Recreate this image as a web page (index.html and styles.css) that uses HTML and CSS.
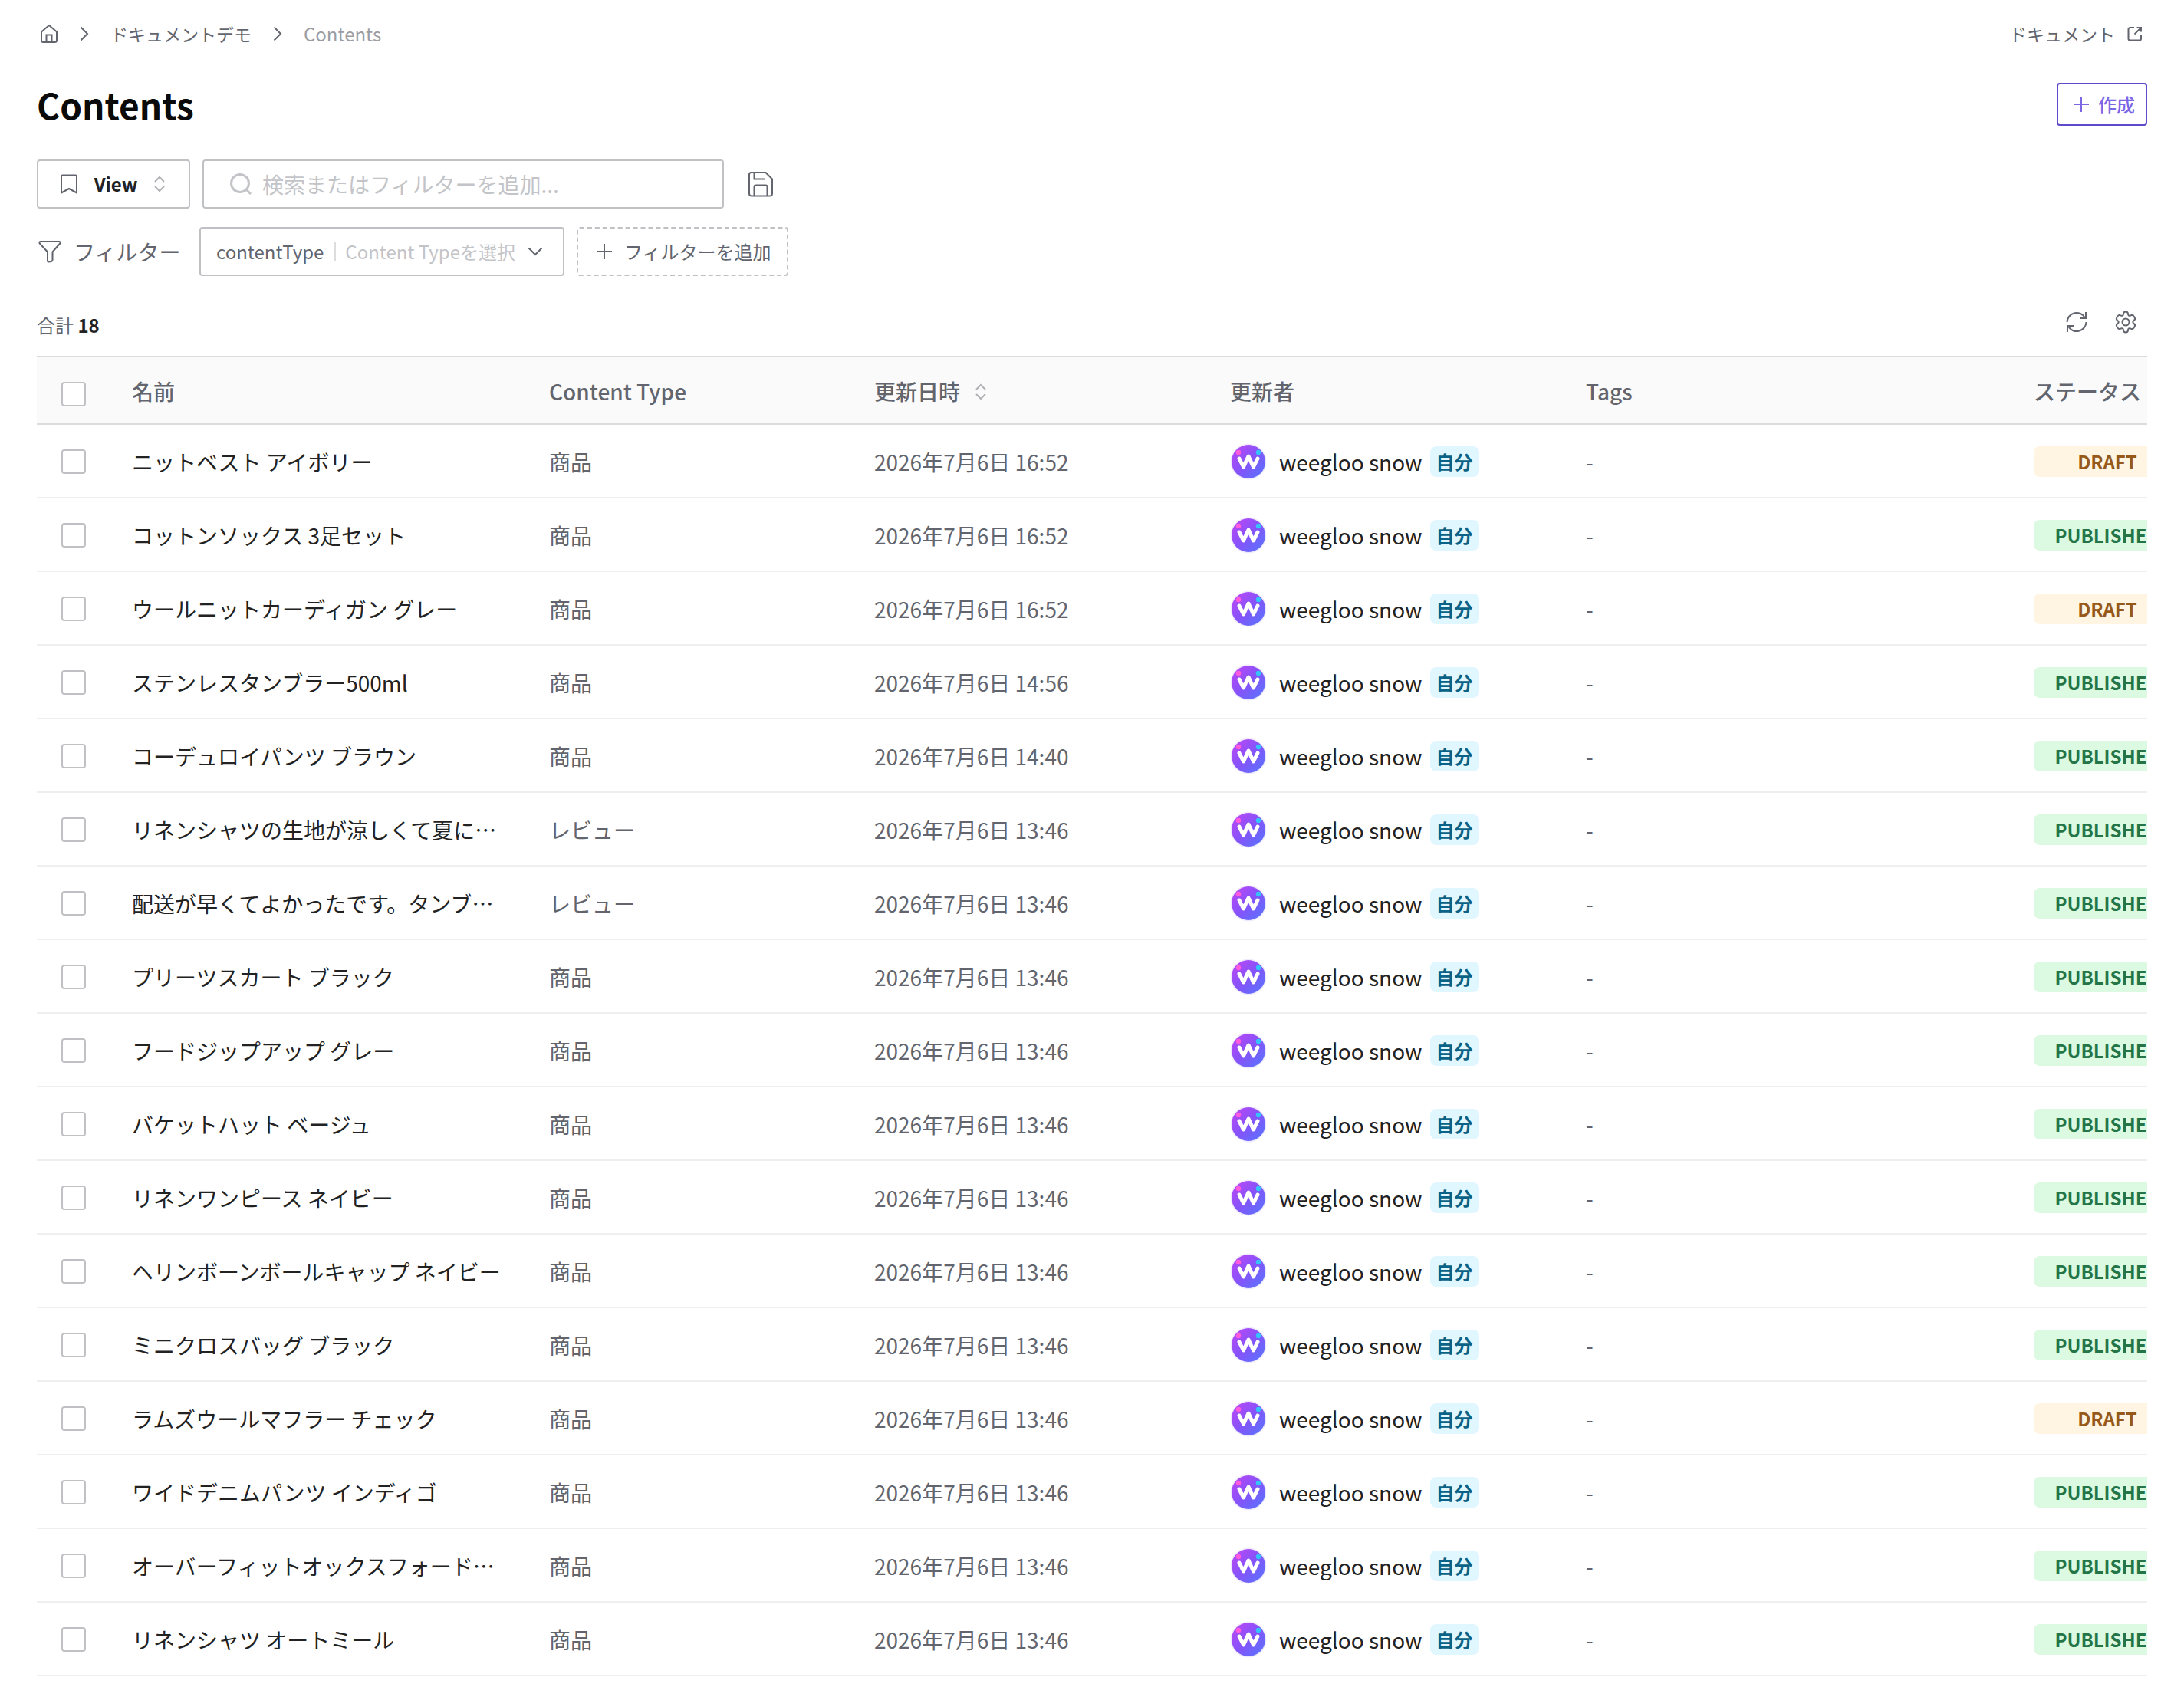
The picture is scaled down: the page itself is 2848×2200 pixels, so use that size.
FILE: index.html
```html
<!DOCTYPE html>
<html lang="ja">
<head>
    <meta charset="UTF-8">
    <meta name="viewport" content="width=device-width, initial-scale=1.0">
    <title>Contents</title>
    <link rel="stylesheet" href="styles.css">
</head>
<body>
    <!-- Shared icons -->
    <svg class="sprite" aria-hidden="true">
        <defs>
            <linearGradient id="avatar-bg" x1="0" y1="0" x2="1" y2="1">
                <stop offset="0" stop-color="#c046f5"/>
                <stop offset="0.5" stop-color="#8553fa"/>
                <stop offset="1" stop-color="#5478ff"/>
            </linearGradient>
        </defs>
        <symbol id="chevron" viewBox="0 0 12 20">
            <path d="M1.5 1.5L10 10L1.5 18.5"/>
        </symbol>
        <symbol id="plus" viewBox="0 0 20 20">
            <path d="M10 0V20M0 10H20"/>
        </symbol>
        <symbol id="sort" viewBox="0 0 14 22">
            <path d="M1 8L7 2L13 8M1 14L7 20L13 14"/>
        </symbol>
        <symbol id="avatar" viewBox="0 0 48 48">
            <circle cx="24" cy="24" r="23.5" fill="#eeeafc"/>
            <circle cx="24" cy="24" r="22" fill="url(#avatar-bg)"/>
            <circle cx="11" cy="12" r="3.2" fill="#ff5bdc"/>
            <circle cx="37" cy="12" r="3.2" fill="#35c3fb"/>
            <path d="M12 20L17.5 31L24 17L30.5 31L36 20" fill="none" stroke="#fff" stroke-width="5" stroke-linecap="round" stroke-linejoin="round"/>
        </symbol>
    </svg>

    <main class="page">
        <!-- Breadcrumb -->
        <div class="topbar">
            <nav class="breadcrumb">
                <a href="#" class="home" aria-label="Home">
                    <svg class="icon" width="24" height="26" viewBox="0 0 24 26"><path d="M2 10.5L12 2L22 10.5V21.5A2.5 2.5 0 0 1 19.5 24H4.5A2.5 2.5 0 0 1 2 21.5ZM8.5 24V14.5H15.5V24"/></svg>
                </a>
                <svg class="icon" width="12" height="20"><use href="#chevron"/></svg>
                <a href="#">ドキュメントデモ</a>
                <svg class="icon" width="12" height="20"><use href="#chevron"/></svg>
                <span class="current">Contents</span>
            </nav>
            <a href="#" class="doc-link">ドキュメント
                <svg class="icon" width="20" height="20" viewBox="0 0 20 20"><path d="M9 2H3.5A2 2 0 0 0 1.5 4V16.5A2 2 0 0 0 3.5 18.5H16A2 2 0 0 0 18 16.5V11M12.5 2H18V7.5M18 2L9.5 10.5"/></svg>
            </a>
        </div>

        <!-- Title -->
        <header class="page-header">
            <h1>Contents</h1>
            <button class="create-btn" type="button">
                <svg class="icon" width="20" height="20"><use href="#plus"/></svg>
                作成
            </button>
        </header>

        <!-- Search and filters -->
        <div class="search-row">
            <button class="view-btn" type="button">
                <svg class="icon" width="22" height="26" viewBox="0 0 22 26"><path d="M1 3A1.5 1.5 0 0 1 2.5 1.5H19.5A1.5 1.5 0 0 1 21 3V24.5L11 19L1 24.5Z"/></svg>
                <span>View</span>
                <svg class="icon sort" width="14" height="22"><use href="#sort"/></svg>
            </button>
            <label class="search-box">
                <svg class="icon" width="28" height="28" viewBox="0 0 28 28"><circle cx="13" cy="13" r="11.5"/><path d="M21.5 21.5L27 27"/></svg>
                <input type="text" aria-label="検索" placeholder="検索またはフィルターを追加...">
            </label>
            <button class="icon-btn save-btn" type="button" aria-label="Save">
                <svg class="icon" width="34" height="34" viewBox="0 0 34 34"><path d="M4.5 2H23.5L32 10.5V29.5A3 3 0 0 1 29 32.5H5A3 3 0 0 1 2 29.5V4.5A2.5 2.5 0 0 1 4.5 2ZM8.5 2V10.5H23M8.5 32V20.5A2 2 0 0 1 10.5 18.5H23.5A2 2 0 0 1 25.5 20.5V32"/></svg>
            </button>
        </div>

        <div class="filter-row">
            <span class="filter-label">
                <svg class="icon" width="30" height="30" viewBox="0 0 30 30"><path d="M3 2H27A1.5 1.5 0 0 1 28.2 4.5L18.5 15.5V26A2 2 0 0 1 17 28L13.5 28.5A1.5 1.5 0 0 1 12 27V15.5L1.8 4.5A1.5 1.5 0 0 1 3 2Z"/></svg>
                フィルター
            </span>
            <div class="type-filter">
                <label for="content-type">contentType</label>
                <select id="content-type">
                    <option>Content Typeを選択</option>
                </select>
                <svg class="icon" width="20" height="12" viewBox="0 0 20 12"><path d="M1.5 1.5L10 10L18.5 1.5"/></svg>
            </div>
            <button class="add-filter" type="button">
                <svg class="icon" width="20" height="20"><use href="#plus"/></svg>
                フィルターを追加
            </button>
        </div>

        <!-- List toolbar -->
        <div class="list-bar">
            <p class="total">合計 <strong>18</strong></p>
            <div class="list-actions">
                <button class="icon-btn" type="button" aria-label="Refresh">
                    <svg class="icon" width="28" height="28" viewBox="0 0 28 28"><path d="M1.5 14A12.5 12.5 0 0 1 25 8.5M26.5 14A12.5 12.5 0 0 1 3 19.5M26 1V9H18M2 27V19H10"/></svg>
                </button>
                <button class="icon-btn" type="button" aria-label="Settings">
                    <svg class="icon" width="30" height="30" viewBox="0 0 30 30"><path d="M15 1.5C17 1.5 18 2.8 18 4.6C18 6.4 19.6 7.4 21.3 6.5C23 5.5 24.6 5.7 25.6 7.4L26.6 9.1C27.6 10.8 27 12.2 25.5 13.1C23.9 14 23.9 16 25.5 16.9C27 17.8 27.6 19.2 26.6 20.9L25.6 22.6C24.6 24.3 23 24.5 21.3 23.5C19.6 22.6 18 23.6 18 25.4C18 27.2 17 28.5 15 28.5C13 28.5 12 27.2 12 25.4C12 23.6 10.4 22.6 8.7 23.5C7 24.5 5.4 24.3 4.4 22.6L3.4 20.9C2.4 19.2 3 17.8 4.5 16.9C6.1 16 6.1 14 4.5 13.1C3 12.2 2.4 10.8 3.4 9.1L4.4 7.4C5.4 5.7 7 5.5 8.7 6.5C10.4 7.4 12 6.4 12 4.6C12 2.8 13 1.5 15 1.5Z"/><circle cx="15" cy="15" r="4.5"/></svg>
                </button>
            </div>
        </div>

        <!-- Contents table -->
        <div class="table-wrap">
            <table>
                <colgroup>
                    <col class="col-check">
                    <col class="col-name">
                    <col class="col-type">
                    <col class="col-date">
                    <col class="col-user">
                    <col class="col-tags">
                    <col class="col-status">
                </colgroup>
                <thead>
                    <tr>
                        <th><input type="checkbox" aria-label="すべて選択"></th>
                        <th>名前</th>
                        <th>Content Type</th>
                        <th>更新日時 <svg class="icon sort" width="14" height="22"><use href="#sort"/></svg></th>
                        <th>更新者</th>
                        <th>Tags</th>
                        <th>ステータス</th>
                    </tr>
                </thead>
                <tbody>
                    <tr>
                        <td><input type="checkbox" aria-label="選択"></td>
                        <td class="name">ニットベスト アイボリー</td>
                        <td>商品</td>
                        <td>2026年7月6日 16:52</td>
                        <td><div class="user"><svg width="48" height="48"><use href="#avatar"/></svg><span>weegloo snow</span><span class="me">自分</span></div></td>
                        <td>-</td>
                        <td><span class="status draft">DRAFT</span></td>
                    </tr>
                    <tr>
                        <td><input type="checkbox" aria-label="選択"></td>
                        <td class="name">コットンソックス 3足セット</td>
                        <td>商品</td>
                        <td>2026年7月6日 16:52</td>
                        <td><div class="user"><svg width="48" height="48"><use href="#avatar"/></svg><span>weegloo snow</span><span class="me">自分</span></div></td>
                        <td>-</td>
                        <td><span class="status published">PUBLISHED</span></td>
                    </tr>
                    <tr>
                        <td><input type="checkbox" aria-label="選択"></td>
                        <td class="name">ウールニットカーディガン グレー</td>
                        <td>商品</td>
                        <td>2026年7月6日 16:52</td>
                        <td><div class="user"><svg width="48" height="48"><use href="#avatar"/></svg><span>weegloo snow</span><span class="me">自分</span></div></td>
                        <td>-</td>
                        <td><span class="status draft">DRAFT</span></td>
                    </tr>
                    <tr>
                        <td><input type="checkbox" aria-label="選択"></td>
                        <td class="name">ステンレスタンブラー500ml</td>
                        <td>商品</td>
                        <td>2026年7月6日 14:56</td>
                        <td><div class="user"><svg width="48" height="48"><use href="#avatar"/></svg><span>weegloo snow</span><span class="me">自分</span></div></td>
                        <td>-</td>
                        <td><span class="status published">PUBLISHED</span></td>
                    </tr>
                    <tr>
                        <td><input type="checkbox" aria-label="選択"></td>
                        <td class="name">コーデュロイパンツ ブラウン</td>
                        <td>商品</td>
                        <td>2026年7月6日 14:40</td>
                        <td><div class="user"><svg width="48" height="48"><use href="#avatar"/></svg><span>weegloo snow</span><span class="me">自分</span></div></td>
                        <td>-</td>
                        <td><span class="status published">PUBLISHED</span></td>
                    </tr>
                    <tr>
                        <td><input type="checkbox" aria-label="選択"></td>
                        <td class="name">リネンシャツの生地が涼しくて夏に…</td>
                        <td>レビュー</td>
                        <td>2026年7月6日 13:46</td>
                        <td><div class="user"><svg width="48" height="48"><use href="#avatar"/></svg><span>weegloo snow</span><span class="me">自分</span></div></td>
                        <td>-</td>
                        <td><span class="status published">PUBLISHED</span></td>
                    </tr>
                    <tr>
                        <td><input type="checkbox" aria-label="選択"></td>
                        <td class="name">配送が早くてよかったです。タンブ…</td>
                        <td>レビュー</td>
                        <td>2026年7月6日 13:46</td>
                        <td><div class="user"><svg width="48" height="48"><use href="#avatar"/></svg><span>weegloo snow</span><span class="me">自分</span></div></td>
                        <td>-</td>
                        <td><span class="status published">PUBLISHED</span></td>
                    </tr>
                    <tr>
                        <td><input type="checkbox" aria-label="選択"></td>
                        <td class="name">プリーツスカート ブラック</td>
                        <td>商品</td>
                        <td>2026年7月6日 13:46</td>
                        <td><div class="user"><svg width="48" height="48"><use href="#avatar"/></svg><span>weegloo snow</span><span class="me">自分</span></div></td>
                        <td>-</td>
                        <td><span class="status published">PUBLISHED</span></td>
                    </tr>
                    <tr>
                        <td><input type="checkbox" aria-label="選択"></td>
                        <td class="name">フードジップアップ グレー</td>
                        <td>商品</td>
                        <td>2026年7月6日 13:46</td>
                        <td><div class="user"><svg width="48" height="48"><use href="#avatar"/></svg><span>weegloo snow</span><span class="me">自分</span></div></td>
                        <td>-</td>
                        <td><span class="status published">PUBLISHED</span></td>
                    </tr>
                    <tr>
                        <td><input type="checkbox" aria-label="選択"></td>
                        <td class="name">バケットハット ベージュ</td>
                        <td>商品</td>
                        <td>2026年7月6日 13:46</td>
                        <td><div class="user"><svg width="48" height="48"><use href="#avatar"/></svg><span>weegloo snow</span><span class="me">自分</span></div></td>
                        <td>-</td>
                        <td><span class="status published">PUBLISHED</span></td>
                    </tr>
                    <tr>
                        <td><input type="checkbox" aria-label="選択"></td>
                        <td class="name">リネンワンピース ネイビー</td>
                        <td>商品</td>
                        <td>2026年7月6日 13:46</td>
                        <td><div class="user"><svg width="48" height="48"><use href="#avatar"/></svg><span>weegloo snow</span><span class="me">自分</span></div></td>
                        <td>-</td>
                        <td><span class="status published">PUBLISHED</span></td>
                    </tr>
                    <tr>
                        <td><input type="checkbox" aria-label="選択"></td>
                        <td class="name">ヘリンボーンボールキャップ ネイビー</td>
                        <td>商品</td>
                        <td>2026年7月6日 13:46</td>
                        <td><div class="user"><svg width="48" height="48"><use href="#avatar"/></svg><span>weegloo snow</span><span class="me">自分</span></div></td>
                        <td>-</td>
                        <td><span class="status published">PUBLISHED</span></td>
                    </tr>
                    <tr>
                        <td><input type="checkbox" aria-label="選択"></td>
                        <td class="name">ミニクロスバッグ ブラック</td>
                        <td>商品</td>
                        <td>2026年7月6日 13:46</td>
                        <td><div class="user"><svg width="48" height="48"><use href="#avatar"/></svg><span>weegloo snow</span><span class="me">自分</span></div></td>
                        <td>-</td>
                        <td><span class="status published">PUBLISHED</span></td>
                    </tr>
                    <tr>
                        <td><input type="checkbox" aria-label="選択"></td>
                        <td class="name">ラムズウールマフラー チェック</td>
                        <td>商品</td>
                        <td>2026年7月6日 13:46</td>
                        <td><div class="user"><svg width="48" height="48"><use href="#avatar"/></svg><span>weegloo snow</span><span class="me">自分</span></div></td>
                        <td>-</td>
                        <td><span class="status draft">DRAFT</span></td>
                    </tr>
                    <tr>
                        <td><input type="checkbox" aria-label="選択"></td>
                        <td class="name">ワイドデニムパンツ インディゴ</td>
                        <td>商品</td>
                        <td>2026年7月6日 13:46</td>
                        <td><div class="user"><svg width="48" height="48"><use href="#avatar"/></svg><span>weegloo snow</span><span class="me">自分</span></div></td>
                        <td>-</td>
                        <td><span class="status published">PUBLISHED</span></td>
                    </tr>
                    <tr>
                        <td><input type="checkbox" aria-label="選択"></td>
                        <td class="name">オーバーフィットオックスフォード…</td>
                        <td>商品</td>
                        <td>2026年7月6日 13:46</td>
                        <td><div class="user"><svg width="48" height="48"><use href="#avatar"/></svg><span>weegloo snow</span><span class="me">自分</span></div></td>
                        <td>-</td>
                        <td><span class="status published">PUBLISHED</span></td>
                    </tr>
                    <tr>
                        <td><input type="checkbox" aria-label="選択"></td>
                        <td class="name">リネンシャツ オートミール</td>
                        <td>商品</td>
                        <td>2026年7月6日 13:46</td>
                        <td><div class="user"><svg width="48" height="48"><use href="#avatar"/></svg><span>weegloo snow</span><span class="me">自分</span></div></td>
                        <td>-</td>
                        <td><span class="status published">PUBLISHED</span></td>
                    </tr>
                </tbody>
            </table>
        </div>
    </main>
</body>
</html>
```
FILE: styles.css
```css
/* General Styles */
* {
    margin: 0;
    padding: 0;
    box-sizing: border-box;
}

body {
    font-family: "Noto Sans CJK JP", sans-serif;
    font-size: 28px;
    line-height: 40px;
    color: #62656e;
    background: #fff;
}

button, input, select {
    font: inherit;
    color: inherit;
    background: none;
    border: none;
}

button {
    cursor: pointer;
}

a {
    color: inherit;
    text-decoration: none;
}

.sprite {
    position: absolute;
    width: 0;
    height: 0;
}

.icon {
    flex: none;
    fill: none;
    stroke: currentColor;
    stroke-width: 2;
}

.page {
    padding: 24px 48px 12px;
}

/* Breadcrumb */
.topbar {
    display: flex;
    justify-content: space-between;
    font-size: 23px;
}

.breadcrumb {
    display: flex;
    align-items: center;
    gap: 28px;
    padding-left: 4px;
}

.home {
    display: flex;
}

.current {
    font-size: 24px;
    color: #9b9da3;
}

.doc-link {
    display: flex;
    align-items: center;
    gap: 16px;
    padding-right: 6px;
}

/* Title */
.page-header {
    display: flex;
    justify-content: space-between;
    align-items: center;
    margin-top: 36px;
}

h1 {
    font-size: 46px;
    line-height: 72px;
    font-weight: 700;
    color: #0a0a0a;
}

.create-btn {
    display: flex;
    align-items: center;
    gap: 12px;
    height: 56px;
    padding: 0 14px 0 20px;
    border: 2px solid #6149cb;
    border-radius: 4px;
    font-size: 24px;
    font-weight: 500;
    color: #7c66e6;
}

/* Search and filters */
.search-row {
    display: flex;
    align-items: center;
    gap: 16px;
    margin-top: 36px;
}

.view-btn {
    display: flex;
    align-items: center;
    justify-content: space-between;
    width: 200px;
    height: 64px;
    padding: 0 31px 0 29px;
    border: 2px solid #c0c1c4;
    border-radius: 4px;
    font-size: 24px;
    font-weight: 700;
}

.view-btn span {
    color: #222;
}

.sort {
    color: #b0b1b5;
}

.search-box {
    display: flex;
    align-items: center;
    gap: 14px;
    width: 680px;
    height: 64px;
    padding: 0 34px;
    border: 2px solid #c0c1c4;
    border-radius: 4px;
    color: #c3c4c8;
}

.search-box .icon {
    stroke-width: 3;
}

.search-box input {
    flex: 1;
    outline: none;
}

.search-box input::placeholder {
    color: #c3c4c8;
}

.icon-btn {
    display: flex;
    align-items: center;
    justify-content: center;
    width: 64px;
    height: 64px;
}

.filter-row {
    display: flex;
    align-items: center;
    gap: 16px;
    margin-top: 24px;
}

.filter-label {
    display: flex;
    align-items: center;
    gap: 16px;
    width: 196px;
    padding-left: 2px;
}

.type-filter {
    display: flex;
    align-items: center;
    width: 476px;
    height: 64px;
    padding: 0 26px 0 20px;
    border: 2px solid #c0c1c4;
    border-radius: 4px;
    font-size: 24px;
}

.type-filter label {
    padding-right: 14px;
    line-height: 24px;
    border-right: 2px solid #dcdddf;
}

.type-filter select {
    flex: 1;
    padding-left: 12px;
    appearance: none;
    color: #c3c4c8;
}

.add-filter {
    display: flex;
    align-items: center;
    gap: 16px;
    height: 64px;
    padding: 0 20px 0 24px;
    border: 2px dashed #c0c1c4;
    border-radius: 4px;
    font-size: 24px;
}

/* List toolbar */
.list-bar {
    display: flex;
    justify-content: space-between;
    align-items: center;
    height: 64px;
    margin-top: 28px;
    font-size: 24px;
}

.total {
    padding-top: 8px;
}

.total strong {
    color: #222;
}

.list-actions {
    display: flex;
    margin-right: -4px;
}

/* Contents table */
.table-wrap {
    overflow: hidden;
    margin-top: 12px;
}

table {
    width: 2824px;
    table-layout: fixed;
    border-collapse: separate;
    border-spacing: 0;
}

.col-check { width: 96px; }
.col-name { width: 544px; }
.col-type { width: 424px; }
.col-date { width: 464px; }
.col-user { width: 464px; }
.col-tags { width: 584px; }
.col-status { width: 248px; }

th, td {
    padding: 2px 28px 0;
    text-align: left;
    vertical-align: middle;
    white-space: nowrap;
}

th:first-child, td:first-child {
    padding: 2px 32px 0;
}

th {
    height: 90px;
    background: #fafafa;
    border-top: 2px solid #dcdcdd;
    border-bottom: 2px solid #dcdcdd;
    font-weight: 500;
}

th .sort {
    margin-left: 14px;
}

td {
    height: 96px;
    border-bottom: 2px solid #efeff0;
}

td.name {
    overflow: hidden;
    text-overflow: ellipsis;
    color: #222;
}

input[type="checkbox"] {
    display: block;
    width: 32px;
    height: 32px;
    appearance: none;
    background: #fff;
    border: 2px solid #c0c1c4;
    border-radius: 4px;
}

th input[type="checkbox"] {
    margin-top: 8px;
}

.user {
    display: flex;
    align-items: center;
    color: #222;
}

.user span {
    margin-left: 16px;
}

.user .me {
    margin-left: 10px;
    padding: 0 8px;
    border-radius: 8px;
    background: #e0f7ff;
    font-size: 24px;
    font-weight: 700;
    color: #0a6286;
}

.status {
    display: block;
    border-radius: 8px;
    font-size: 24px;
    font-weight: 700;
    text-align: center;
}

.draft {
    background: #fff5e2;
    color: #96591a;
}

.published {
    background: #dcfae2;
    color: #237547;
}
```
